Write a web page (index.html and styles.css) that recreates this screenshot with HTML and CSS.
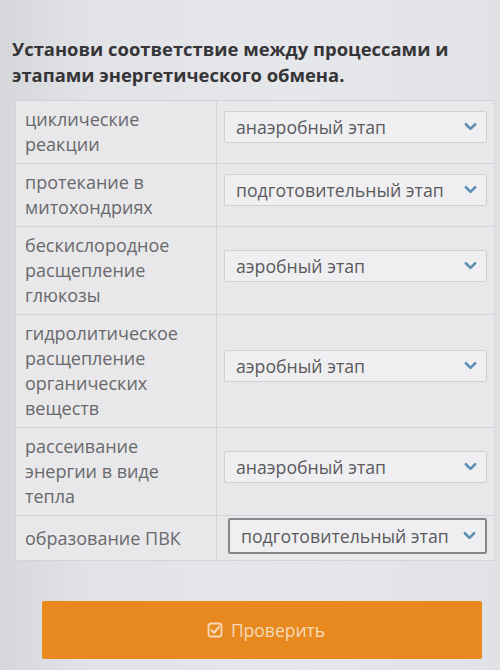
FILE: index.html
```html
<!DOCTYPE html>
<html lang="ru">
<head>
<meta charset="utf-8">
<title>Установи соответствие</title>
<link rel="stylesheet" href="styles.css">
</head>
<body>
<main class="page">
  <h1 class="task-title">Установи соответствие между процессами и этапами энергетического обмена.</h1>

  <div class="match-table">
    <div class="match-row">
      <div class="term">циклические реакции</div>
      <div class="answer"><div class="select"><span>анаэробный этап</span><svg class="chev" viewBox="0 0 14 10"><path d="M2 2 L7 7 L12 2"/></svg></div></div>
    </div>
    <div class="match-row">
      <div class="term">протекание в митохондриях</div>
      <div class="answer"><div class="select"><span>подготовительный этап</span><svg class="chev" viewBox="0 0 14 10"><path d="M2 2 L7 7 L12 2"/></svg></div></div>
    </div>
    <div class="match-row">
      <div class="term">бескислородное расщепление глюкозы</div>
      <div class="answer"><div class="select"><span>аэробный этап</span><svg class="chev" viewBox="0 0 14 10"><path d="M2 2 L7 7 L12 2"/></svg></div></div>
    </div>
    <div class="match-row">
      <div class="term">гидролитическое расщепление органических веществ</div>
      <div class="answer"><div class="select"><span>аэробный этап</span><svg class="chev" viewBox="0 0 14 10"><path d="M2 2 L7 7 L12 2"/></svg></div></div>
    </div>
    <div class="match-row">
      <div class="term">рассеивание энергии в виде тепла</div>
      <div class="answer"><div class="select"><span>анаэробный этап</span><svg class="chev" viewBox="0 0 14 10"><path d="M2 2 L7 7 L12 2"/></svg></div></div>
    </div>
    <div class="match-row match-row-last">
      <div class="term">образование ПВК</div>
      <div class="answer"><div class="select select-focus"><span>подготовительный этап</span><svg class="chev" viewBox="0 0 14 10"><path d="M2 2 L7 7 L12 2"/></svg></div></div>
    </div>
  </div>

  <div class="actions">
    <button class="check-btn" type="button">
      <svg class="check-icon" viewBox="0 0 16 16"><rect x="1.5" y="1.5" width="13" height="13" rx="2.5"/><path d="M4.5 8.2 L7 10.7 L12 5"/></svg>
      <span>Проверить</span>
    </button>
  </div>
</main>
</body>
</html>
```

FILE: styles.css
```css
* {
  box-sizing: border-box;
}

html, body {
  margin: 0;
  height: 100%;
}

body {
  background: linear-gradient(90deg, #d6d7da 0%, #e2e3e6 18%, #e6e7ea 60%, #e1e2e5 100%);
  font-family: "Open Sans", "Noto Sans", sans-serif;
  color: #555;
}

.page {
  padding: 36px 5px 0 12px;
}

.task-title {
  margin: 0 0 12px 0;
  font-size: 18.4px;
  line-height: 26px;
  font-weight: 700;
  color: #353538;
}

.match-table {
  margin-left: 3px;
  width: 480px;
  border: 1px solid #d3d4d7;
  background: #e8e8ea;
}

.match-row {
  display: grid;
  grid-template-columns: 201px 1fr;
  border-top: 1px solid #d3d4d7;
}

.match-row:first-child {
  border-top: none;
}

.term {
  display: flex;
  align-items: center;
  padding: 6px 22px 6px 9px;
  font-size: 18px;
  line-height: 25px;
  color: #69696c;
  border-right: 1px solid #d3d4d7;
}

.answer {
  display: flex;
  align-items: center;
  padding: 0 7px 10px 7px;
}

.match-row-last .answer {
  padding: 2px 7px 6px 7px;
}

.select {
  flex: 1;
  display: flex;
  align-items: center;
  justify-content: space-between;
  height: 32px;
  padding: 0 9px 0 11px;
  background: #efeff1;
  border: 1px solid #cfd0d3;
  border-radius: 2px;
  font-size: 17.7px;
  color: #5a5a5d;
}

.select-focus {
  height: 36px;
  margin-left: 4px;
  border: 2px solid #86878b;
}

.chev {
  width: 13px;
  height: 10px;
  flex: none;
}

.chev path {
  fill: none;
  stroke: #5d8fb3;
  stroke-width: 2.8;
  stroke-linecap: round;
  stroke-linejoin: round;
}

.actions {
  padding: 40px 0 0 30px;
}

.check-btn {
  width: 440px;
  height: 58px;
  display: flex;
  align-items: center;
  justify-content: center;
  gap: 8px;
  border: none;
  border-radius: 2px;
  background: #e8891f;
  color: #f6d9b8;
  font-family: "Open Sans", "Noto Sans", sans-serif;
  font-size: 17.5px;
  padding: 0 0 0 8px;
}

.check-icon {
  width: 16px;
  height: 16px;
}

.check-icon rect {
  fill: none;
  stroke: #f6d9b8;
  stroke-width: 1.8;
}

.check-icon path {
  fill: none;
  stroke: #f6d9b8;
  stroke-width: 2.2;
  stroke-linecap: round;
  stroke-linejoin: round;
}
```
